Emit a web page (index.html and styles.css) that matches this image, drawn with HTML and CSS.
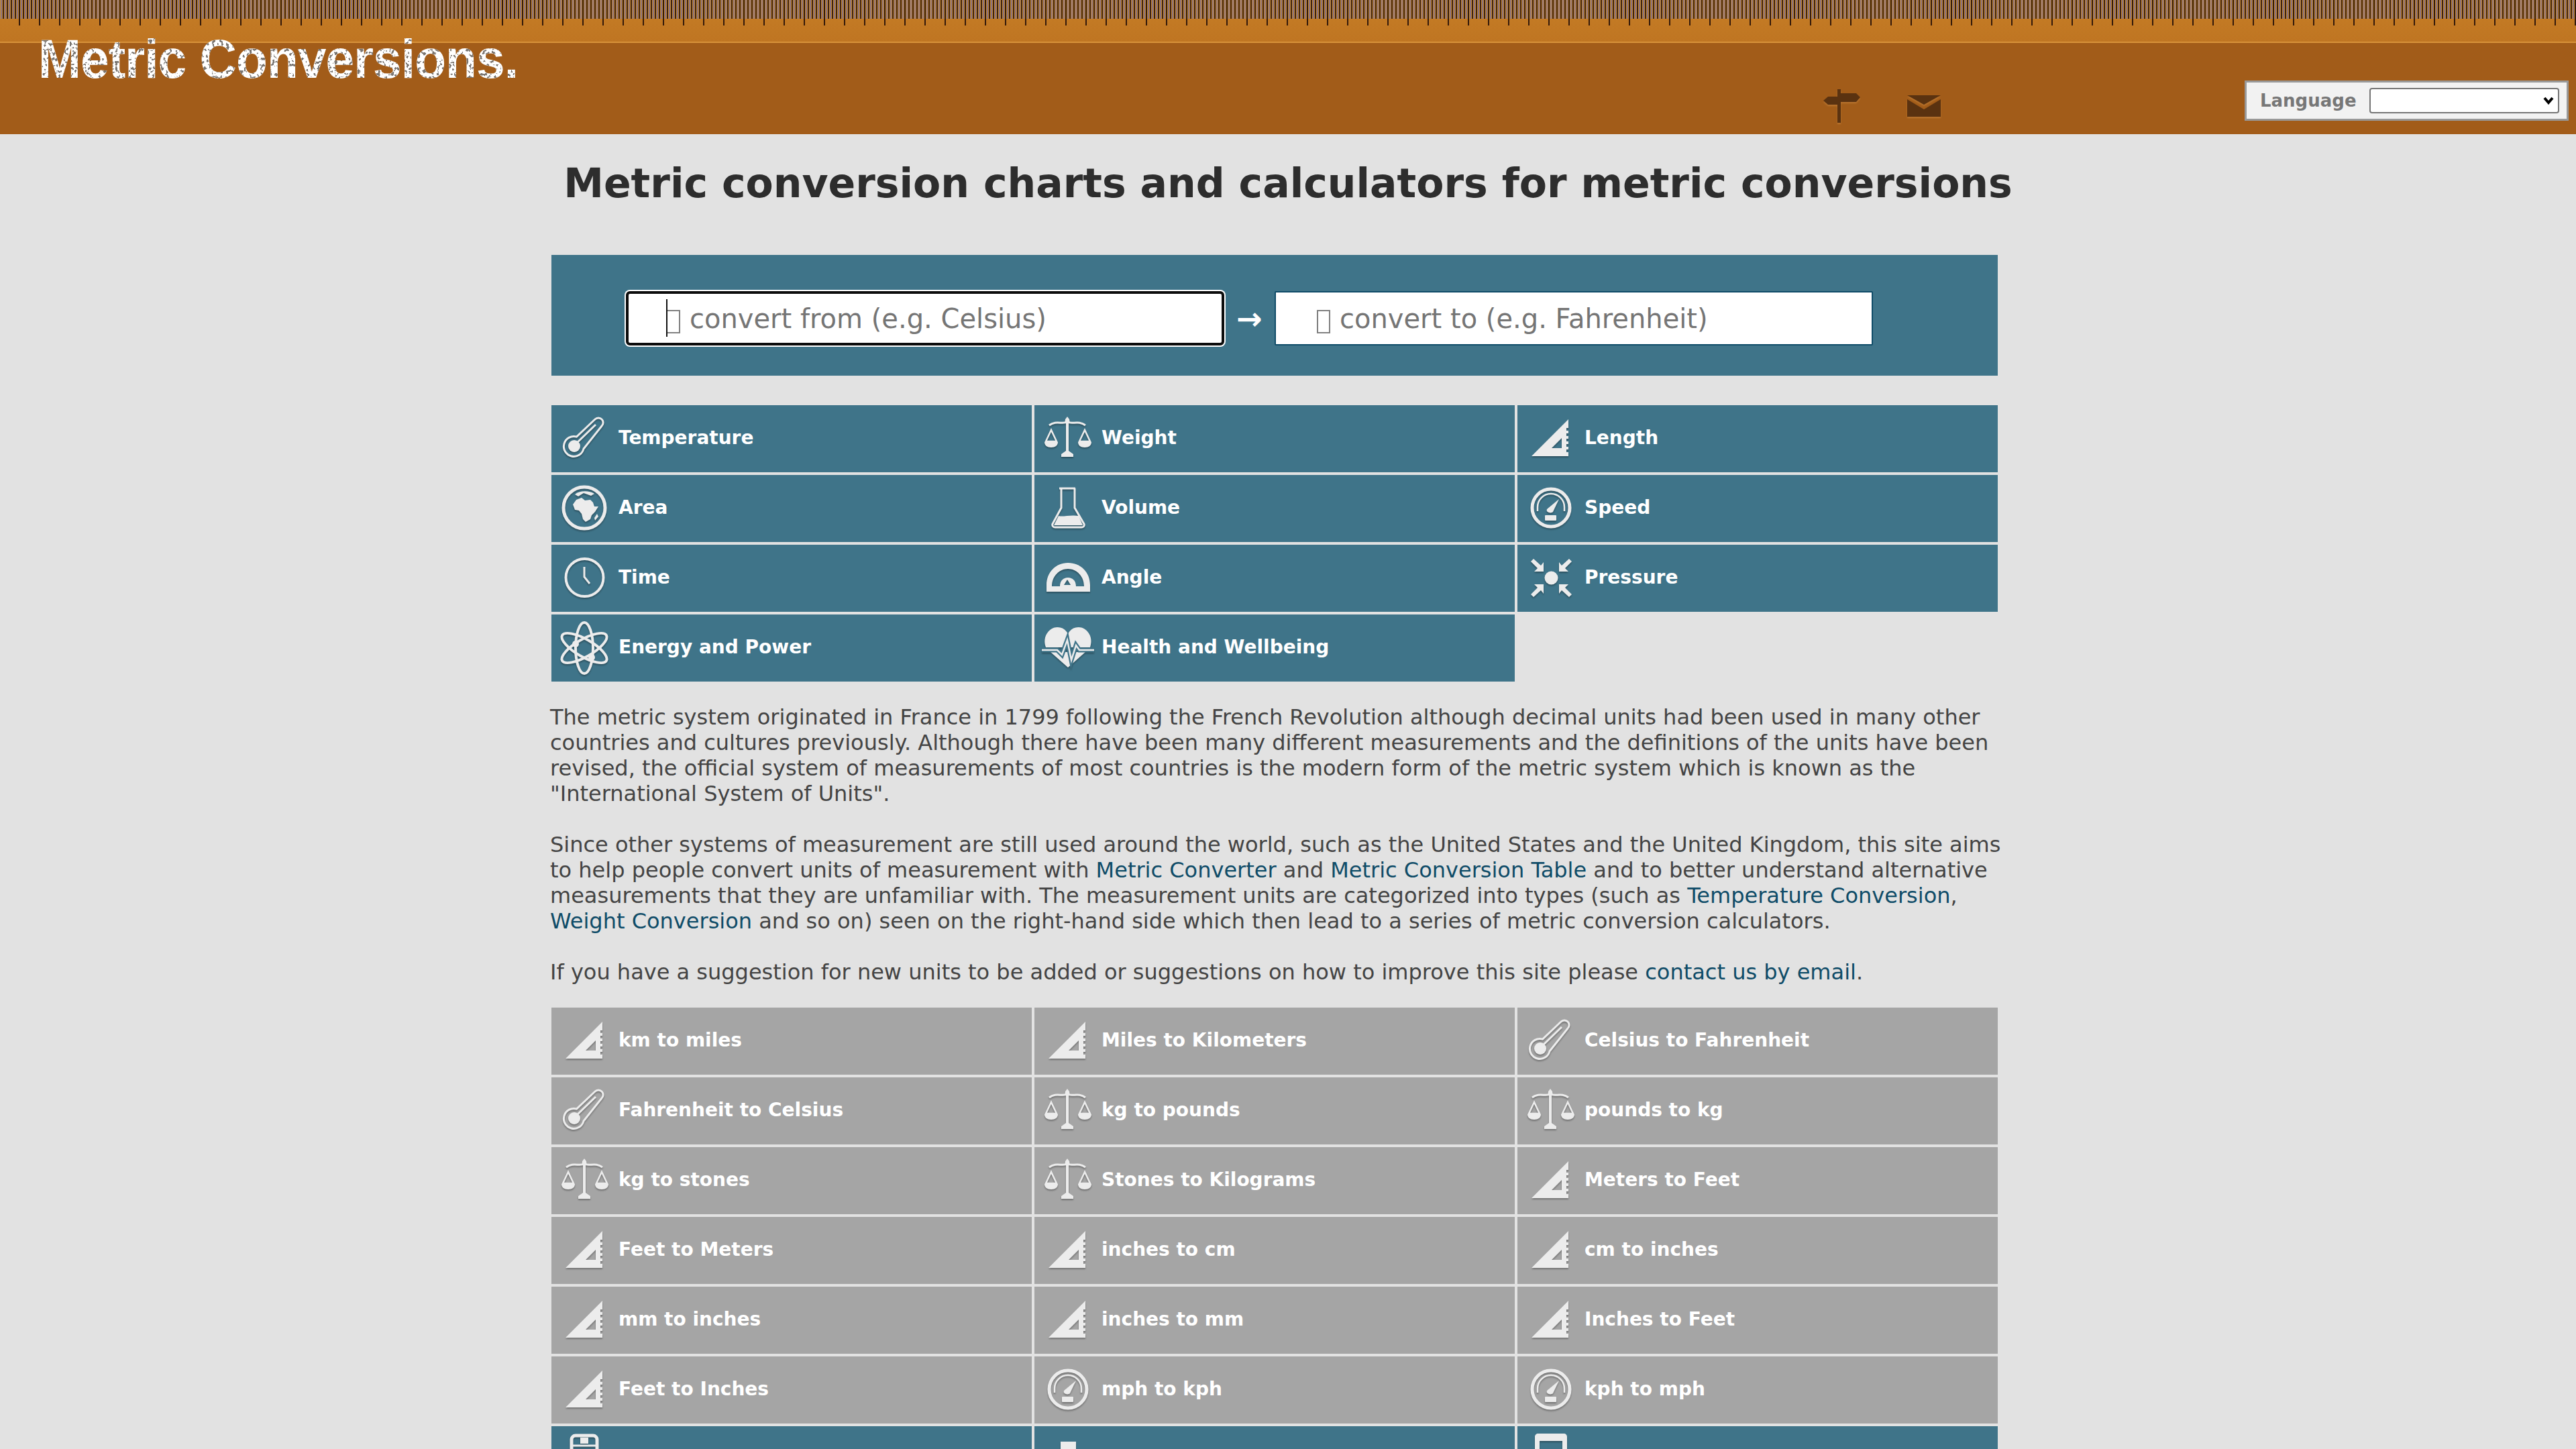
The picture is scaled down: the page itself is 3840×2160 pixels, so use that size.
FILE: index.html
```html
<!DOCTYPE html>
<html lang="en">

<head>
	<meta charset="UTF-8">
	<meta name="viewport" content="width=device-width, initial-scale=1.0">
	<title>Metric conversion charts and calculators for metric conversions</title>
	<link rel="stylesheet" href="styles.css">
</head>

<body>
	<svg class="defs" width="0" height="0">
		<defs>
			<filter id="worn" x="0" y="0" width="100%" height="100%">
				<feTurbulence type="fractalNoise" baseFrequency="0.22" numOctaves="2" seed="7" result="noise" />
				<feColorMatrix in="noise" type="matrix" values="0 0 0 0 0 0 0 0 0 0 0 0 0 0 0 0 0 0 -14 6.200" result="spots" />
				<feFlood flood-color="#7a7570" />
				<feComposite in2="spots" operator="in" />
				<feComposite in2="SourceAlpha" operator="in" result="marks" />
				<feMerge>
					<feMergeNode in="SourceGraphic" />
					<feMergeNode in="marks" />
				</feMerge>
			</filter>
		</defs>

		<symbol id="i-temp" viewBox="0 0 80 80">
			<path class="line" d="M55 11L27.500 37A15 15 0 1 0 38 55L65 21A7 7 0 0 0 55 11Z" />
			<circle class="solid" cx="24" cy="51" r="9" />
			<path class="line" d="M27 47L56 19" />
		</symbol>
		<symbol id="i-weight" viewBox="0 0 80 80">
			<path class="line" d="M12 20C22 12 32 19 39 15C46 19 56 12 66 20" />
			<path class="solid" d="M36 11L39 7L42 11L43 17H35Z" />
			<path class="solid" d="M37 17H41V58L48 63V67H30V63L37 58Z" />
			<path class="thin" d="M15 27L7 44H23ZM65 27L57 44H73Z" />
			<path class="solid" d="M5 45H25C25 50 21 53 15 53C9 53 5 50 5 45ZM55 45H75C75 50 71 53 65 53C59 53 55 50 55 45Z" />
		</symbol>
		<symbol id="i-length" viewBox="0 0 80 80">
			<path class="solid" fill-rule="evenodd" d="M11 66L66 11V24H63V28H66V32H63V36H66V40H63V44H66V48H63V52H66V56H63V60H66V66ZM41 54H56V39Z" />
		</symbol>
		<symbol id="i-area" viewBox="0 0 80 80">
			<circle class="line thick" cx="39" cy="39" r="31" />
			<path class="solid" d="M22 34L27 27L35 24L40 28L48 27L52 31L54 37L60 37L55 45L50 50L48 56L41 60L37 56L35 48L31 43L25 42Z" />
			<path class="solid" d="M25 19C32 13 46 13 54 18L49 21L38 17L30 22Z" />
			<path class="solid" d="M58 48L60 52L55 58L54 54Z" />
		</symbol>
		<symbol id="i-volume" viewBox="0 0 80 80">
			<path class="line" d="M27 10H51M30 10V39L17 63C16 66 18 68 21 68H60C63 68 65 66 64 63L50 39V10" />
			<path class="solid" d="M26 51C32 53 43 49 56 51L62 65H19Z" />
		</symbol>
		<symbol id="i-speed" viewBox="0 0 80 80">
			<circle class="line thick" cx="40" cy="39" r="28" />
			<path class="thin" d="M20 44V38A20 20 0 0 1 60 38V44" />
			<path class="solid" d="M34 41L52 26L43 45C40 48 32 46 34 41Z" />
			<rect class="solid" x="31" y="50" width="17" height="8" rx="1" />
		</symbol>
		<symbol id="i-time" viewBox="0 0 80 80">
			<circle class="line mid" cx="39.500" cy="39" r="28" />
			<path class="line" d="M39 23V38L47 48" />
		</symbol>
		<symbol id="i-angle" viewBox="0 0 80 80">
			<path class="solid" fill-rule="evenodd" d="M8 60V50C8 31 22 17 40 17C59 17 73 31 73 50V60ZM16 52H28C28 44 33 39 40 39C47 39 52 44 52 52H64C64 37 53 26 40 26C27 26 16 37 16 52ZM39 42L34 50H44Z" />
		</symbol>
		<symbol id="i-pressure" viewBox="0 0 80 80">
			<circle class="solid" cx="40.500" cy="39.500" r="10" />
			<path class="solid" d="M14 11L25 21L29 16V30H15L20 25L10 15Z" />
			<path class="solid" d="M67 11L56 21L52 16V30H66L61 25L71 15Z" />
			<path class="solid" d="M14 68L25 58L29 63V49H15L20 54L10 64Z" />
			<path class="solid" d="M67 68L56 58L52 63V49H66L61 54L71 64Z" />
		</symbol>
		<symbol id="i-energy" viewBox="0 0 80 80">
			<ellipse class="line mid" cx="39" cy="40" rx="13" ry="38" />
			<ellipse class="line mid" cx="39" cy="40" rx="13" ry="38" transform="rotate(60 39 40)" />
			<ellipse class="line mid" cx="39" cy="40" rx="13" ry="38" transform="rotate(-60 39 40)" />
			<circle class="solid" cx="26" cy="34" r="5" />
			<circle class="solid" cx="50" cy="54" r="5" />
		</symbol>
		<symbol id="i-health" viewBox="0 0 80 80">
			<path class="solid" d="M7 39C1 22 13 9 24 9C32 9 37 13 40 19C43 13 48 9 56 9C67 9 79 22 73 39H7Z" />
			<path class="solid" d="M14 46H66L40 69Z" />
			<path class="gap" d="M1 43H24L31 50L39 28L45 58L52 36L57 43H79" />
			<path class="thin" d="M1 43H24L31 50L39 28L45 58L52 36L57 43H79" />
		</symbol>
		<symbol id="i-calc" viewBox="0 0 80 80">
			<rect class="line thick" x="20" y="4" width="38" height="70" rx="6" />
			<rect class="solid" x="33" y="7" width="12" height="9" />
			<path class="line" d="M20 19H58" />
		</symbol>
		<symbol id="i-peg" viewBox="0 0 80 80">
			<path class="solid" d="M29 13H52V24L66 40H15L29 24Z" />
		</symbol>
		<symbol id="i-window" viewBox="0 0 80 80">
			<path class="solid" fill-rule="evenodd" d="M21 1H59C62 1 64 3 64 6V70H16V6C16 3 18 1 21 1ZM23 12V60H57V12Z" />
		</symbol>
	</svg>

	<header class="site-header">
		<a class="logo">Metric Conversions.</a>
		<div class="nav-icons">
			<svg class="signpost" viewBox="0 0 56 50">
				<path d="M0 17L7 11H21V23H7ZM26 6H49L55 12L49 19H26Z" />
				<rect x="21" y="0" width="5" height="50" />
			</svg>
			<svg class="envelope" viewBox="0 0 50 32">
				<path d="M0 0H50L25 14Z" />
				<path d="M0 6L25 21L50 6V32H0Z" />
			</svg>
		</div>
		<div class="language">
			<label for="lang">Language</label>
			<span class="lang-select">
				<select id="lang">
					<option></option>
				</select>
				<svg viewBox="0 0 16 13"><path d="M2 3L8 10L14 3" /></svg>
			</span>
		</div>
	</header>

	<main class="content">
		<h1>Metric conversion charts and calculators for metric conversions</h1>

		<form class="search">
			<span class="field active"><input type="text" placeholder="convert from (e.g. Celsius)"></span>
			<span class="arrow">→</span>
			<span class="field"><input type="text" placeholder="convert to (e.g. Fahrenheit)"></span>
		</form>

		<nav class="tiles">
			<a class="tile"><svg><use href="#i-temp" /></svg>Temperature</a>
			<a class="tile"><svg><use href="#i-weight" /></svg>Weight</a>
			<a class="tile"><svg><use href="#i-length" /></svg>Length</a>
			<a class="tile"><svg><use href="#i-area" /></svg>Area</a>
			<a class="tile"><svg><use href="#i-volume" /></svg>Volume</a>
			<a class="tile"><svg><use href="#i-speed" /></svg>Speed</a>
			<a class="tile"><svg><use href="#i-time" /></svg>Time</a>
			<a class="tile"><svg><use href="#i-angle" /></svg>Angle</a>
			<a class="tile"><svg><use href="#i-pressure" /></svg>Pressure</a>
			<a class="tile"><svg><use href="#i-energy" /></svg>Energy and Power</a>
			<a class="tile"><svg><use href="#i-health" /></svg>Health and Wellbeing</a>
		</nav>

		<div class="intro">
			<p>The metric system originated in France in 1799 following the French Revolution although decimal units had been used in many other countries and cultures previously. Although there have been many different measurements and the definitions of the units have been revised, the official system of measurements of most countries is the modern form of the metric system which is known as the "International System of Units".</p>
			<p>Since other systems of measurement are still used around the world, such as the United States and the United Kingdom, this site aims to help people convert units of measurement with <a href="#">Metric Converter</a> and <a href="#">Metric Conversion Table</a> and to better understand alternative measurements that they are unfamiliar with. The measurement units are categorized into types (such as <a href="#">Temperature Conversion</a>, <a href="#">Weight Conversion</a> and so on) seen on the right-hand side which then lead to a series of metric conversion calculators.</p>
			<p>If you have a suggestion for new units to be added or suggestions on how to improve this site please <a href="#">contact us by email</a>.</p>
		</div>

		<nav class="tiles popular">
			<a class="tile"><svg><use href="#i-length" /></svg>km to miles</a>
			<a class="tile"><svg><use href="#i-length" /></svg>Miles to Kilometers</a>
			<a class="tile"><svg><use href="#i-temp" /></svg>Celsius to Fahrenheit</a>
			<a class="tile"><svg><use href="#i-temp" /></svg>Fahrenheit to Celsius</a>
			<a class="tile"><svg><use href="#i-weight" /></svg>kg to pounds</a>
			<a class="tile"><svg><use href="#i-weight" /></svg>pounds to kg</a>
			<a class="tile"><svg><use href="#i-weight" /></svg>kg to stones</a>
			<a class="tile"><svg><use href="#i-weight" /></svg>Stones to Kilograms</a>
			<a class="tile"><svg><use href="#i-length" /></svg>Meters to Feet</a>
			<a class="tile"><svg><use href="#i-length" /></svg>Feet to Meters</a>
			<a class="tile"><svg><use href="#i-length" /></svg>inches to cm</a>
			<a class="tile"><svg><use href="#i-length" /></svg>cm to inches</a>
			<a class="tile"><svg><use href="#i-length" /></svg>mm to inches</a>
			<a class="tile"><svg><use href="#i-length" /></svg>inches to mm</a>
			<a class="tile"><svg><use href="#i-length" /></svg>Inches to Feet</a>
			<a class="tile"><svg><use href="#i-length" /></svg>Feet to Inches</a>
			<a class="tile"><svg><use href="#i-speed" /></svg>mph to kph</a>
			<a class="tile"><svg><use href="#i-speed" /></svg>kph to mph</a>
		</nav>

		<nav class="tiles">
			<a class="tile"><svg><use href="#i-calc" /></svg></a>
			<a class="tile"><svg><use href="#i-peg" /></svg></a>
			<a class="tile"><svg><use href="#i-window" /></svg></a>
		</nav>
	</main>
</body>

</html>
```

FILE: styles.css
```css
html {
	height: 100%;
	overflow: hidden;
}

body {
	font-family: "DejaVu Sans", sans-serif;
	margin: 0;
	color: #444;
	background-color: #e2e2e2;
}

a {
	color: #0f4c68;
	text-decoration: none;
}

.defs {
	display: block;
	height: 0;
}

/* ruler along the top of the page */
.site-header {
	display: flex;
	align-items: flex-start;
	height: 200px;
	background-color: #a25c19;
	background-image:
		repeating-linear-gradient(90deg, transparent 0 28px, #33190a 28px 30px),
		repeating-linear-gradient(90deg, #c58a2e 0 1px, #8f7480 1px 3px, #c58a2e 3px 4px, #3f2212 4px 6px),
		linear-gradient(#d8923a, #d8923a),
		linear-gradient(#c67e26, #bf7522);
	background-repeat: no-repeat;
	background-size: 100% 38px, 100% 28px, 100% 2px, 100% 62px;
	background-position: 0 0, 0 0, 0 62px, 0 0;
}

.logo {
	margin: 41px 0 0 57px;
	color: #fff;
	font-family: "Liberation Sans", Arial, sans-serif;
	font-size: 82px;
	font-weight: bold;
	line-height: 94px;
	letter-spacing: -1px;
	transform: scaleX(.935);
	transform-origin: 0 0;
	filter: url(#worn);
}

.nav-icons {
	display: flex;
	align-items: flex-start;
	gap: 69px;
	margin: 133px 453px 0 auto;
}

.nav-icons svg {
	fill: #5a3210;
	filter: drop-shadow(0 2px 1px rgba(255, 190, 110, .25));
}

.signpost {
	width: 56px;
	height: 50px;
}

.envelope {
	width: 50px;
	height: 32px;
	margin-top: 9px;
}

.language {
	display: flex;
	align-items: center;
	gap: 19px;
	box-sizing: border-box;
	width: 483px;
	height: 60px;
	margin: 120px 11px 0 0;
	padding: 0 11px 0 20px;
	border: 3px solid #999;
	background-color: #f2f2f2;
}

.language label {
	color: #777;
	font-size: 26px;
	font-weight: bold;
}

.lang-select {
	position: relative;
	display: flex;
	flex: 1;
}

.lang-select select {
	flex: 1;
	height: 38px;
	border: 2px solid #767676;
	border-radius: 4px;
	background-color: #fff;
	font-size: 24px;
	appearance: none;
}

.lang-select svg {
	position: absolute;
	top: 12px;
	right: 8px;
	width: 16px;
	height: 13px;
	fill: none;
	stroke: #000;
	stroke-width: 4px;
}

.content {
	width: 2200px;
	margin: 0 auto;
}

h1 {
	margin: 0;
	padding-top: 37px;
	color: #2d2d2d;
	font-size: 60px;
	line-height: 72px;
	text-align: center;
}

.search {
	display: flex;
	align-items: center;
	height: 180px;
	width: 2156px;
	box-sizing: border-box;
	margin: 71px 0 44px 2px;
	padding: 9px 0 0 111px;
	background-color: #3f7489;
}

.field {
	position: relative;
	display: block;
}

/* missing-glyph box in front of the placeholder */
.field::before {
	content: "";
	position: absolute;
	top: 28px;
	left: 63px;
	box-sizing: border-box;
	width: 20px;
	height: 35px;
	border: 2px solid #808080;
}

.search input {
	display: block;
	box-sizing: border-box;
	width: 892px;
	height: 81px;
	padding: 0 20px 0 95px;
	border: 2px solid #0f4c68;
	border-radius: 2px;
	background-color: #fff;
	font-family: "DejaVu Sans", sans-serif;
	font-size: 40px;
}

.search input::placeholder {
	color: #757575;
}

/* the first box has the focus in the picture: ring and caret */
.active input {
	padding-left: 91px;
	border: 4px solid #0c0c0c;
	border-radius: 6px;
	box-shadow: 0 0 0 2px #fff;
}

.active::before {
	left: 60px;
	width: 21px;
}

.active::after {
	content: "";
	position: absolute;
	top: 12px;
	left: 60px;
	width: 2px;
	height: 56px;
	background-color: #111;
}

.arrow {
	width: 75px;
	color: #fff;
	font-size: 46px;
	font-weight: bold;
	text-align: center;
}

.tiles {
	display: grid;
	grid-template-columns: repeat(3, 716px);
	grid-auto-rows: 100px;
	gap: 4px;
	margin-left: 2px;
	--tile: #3f7489;
}

.popular {
	margin-bottom: 4px;
	--tile: #a5a5a5;
}

.tile {
	display: flex;
	align-items: center;
	gap: 10px;
	padding: 0 0 4px 10px;
	color: #fff;
	background-color: var(--tile);
	font-size: 28px;
	font-weight: bold;
}

.tile svg {
	flex: none;
	width: 80px;
	height: 80px;
	margin-top: 4px;
	filter: drop-shadow(0 2px 1px rgba(0, 0, 0, .3));
}

.solid {
	fill: #ececec;
}

.line {
	fill: none;
	stroke: #ececec;
	stroke-width: 3px;
}

.mid {
	stroke-width: 4px;
}

.thick {
	stroke-width: 5px;
}

.thin {
	fill: none;
	stroke: #ececec;
	stroke-width: 2.500px;
}

.gap {
	fill: none;
	stroke: var(--tile);
	stroke-width: 7px;
}

.intro {
	margin: 34px 0;
	font-size: 32px;
	line-height: 38px;
}

.intro p {
	margin: 0 0 38px;
}

.intro p:last-child {
	margin-bottom: 0;
}
```
